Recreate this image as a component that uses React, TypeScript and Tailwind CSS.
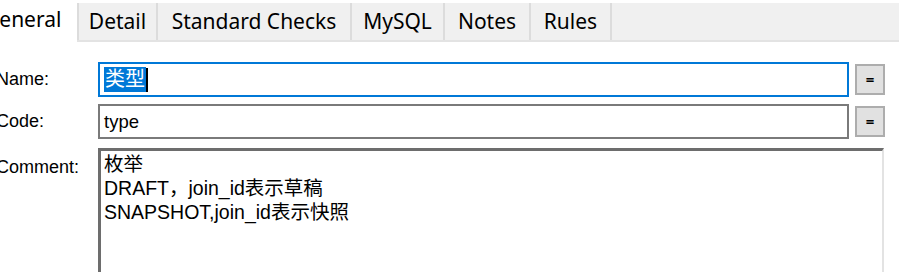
import React from 'react';

const tabs = [
    { name: 'Detail', w: 'w-[81px]' },
    { name: 'Standard Checks', w: 'w-[194px]' },
    { name: 'MySQL', w: 'w-[93px]' },
    { name: 'Notes', w: 'w-[86px]' },
    { name: 'Rules', w: 'w-[81px]' },
];

function EqButton() {
    return (
        <button className="w-[30px] h-[31px] bg-[#e1e1e1] border-2 border-[#adadad] flex items-center justify-center text-[15px] font-bold leading-none text-black">
            =
        </button>
    );
}

export default function App() {
    const ui = { fontFamily: '"Noto Sans", "Noto Sans CJK SC", sans-serif' };
    const label = { fontFamily: '"Liberation Sans", "Noto Sans CJK SC", sans-serif' };
    const cjk = { fontFamily: '"Liberation Sans", "Noto Sans CJK SC", sans-serif' };

    return (
        <div className="w-[899px] h-[272px] bg-white overflow-hidden relative">
            {/* Tab strip */}
            <div className="flex h-[42px] items-stretch" style={ui}>
                <div className="w-[77px] bg-white flex items-center overflow-hidden">
                    <span className="text-[21px] text-black ml-[-16px] mt-[-3px] whitespace-nowrap">General</span>
                </div>
                <div className="flex flex-1 mt-[3px] bg-[#f0f0f0] border-b-2 border-[#e3e3e3]">
                    {tabs.map((t) => (
                        <div
                            key={t.name}
                            className={`${t.w} flex items-center justify-center border-r-2 border-[#dcdcdc] first:border-l-2 text-[21px] text-black whitespace-nowrap`}
                        >
                            {t.name}
                        </div>
                    ))}
                </div>
            </div>

            {/* Form */}
            <div className="ml-[-4px] mt-[20px] flex flex-col gap-[7px]">
                <div className="flex items-center">
                    <span className="w-[102px] text-[18px] text-black" style={label}>Name:</span>
                    <div className="w-[751px] h-[35px] border-2 border-[#0078d7] flex items-center pl-[4px]">
                        <span className="bg-[#0078d7] text-white text-[20px] leading-[25px] px-[1px]" style={cjk}>类型</span>
                        <span className="w-[2px] h-[24px] bg-black" />
                    </div>
                    <div className="ml-[6px]"><EqButton /></div>
                </div>
                <div className="flex items-center">
                    <span className="w-[102px] text-[18px] text-black" style={label}>Code:</span>
                    <div className="w-[751px] h-[35px] border-2 border-[#7a7a7a] flex items-center pl-[4px]">
                        <span className="text-black text-[18.5px]" style={cjk}>type</span>
                    </div>
                    <div className="ml-[6px]"><EqButton /></div>
                </div>
                <div className="flex items-start mt-[2px]">
                    <span className="w-[102px] text-[18px] text-black mt-[6px]" style={label}>Comment:</span>
                    <div className="w-[786px] h-[140px] border-t-[3px] border-l-[3px] border-r-2 border-t-[#6d6d6d] border-l-[#6d6d6d] border-r-[#e3e3e3] pl-[3px] pt-[1px]">
                        <div className="text-[19.5px] leading-[24px] text-black" style={cjk}>
                            <div>枚举</div>
                            <div>DRAFT，join_id表示草稿</div>
                            <div>SNAPSHOT,join_id表示快照</div>
                        </div>
                    </div>
                </div>
            </div>
        </div>
    );
}
